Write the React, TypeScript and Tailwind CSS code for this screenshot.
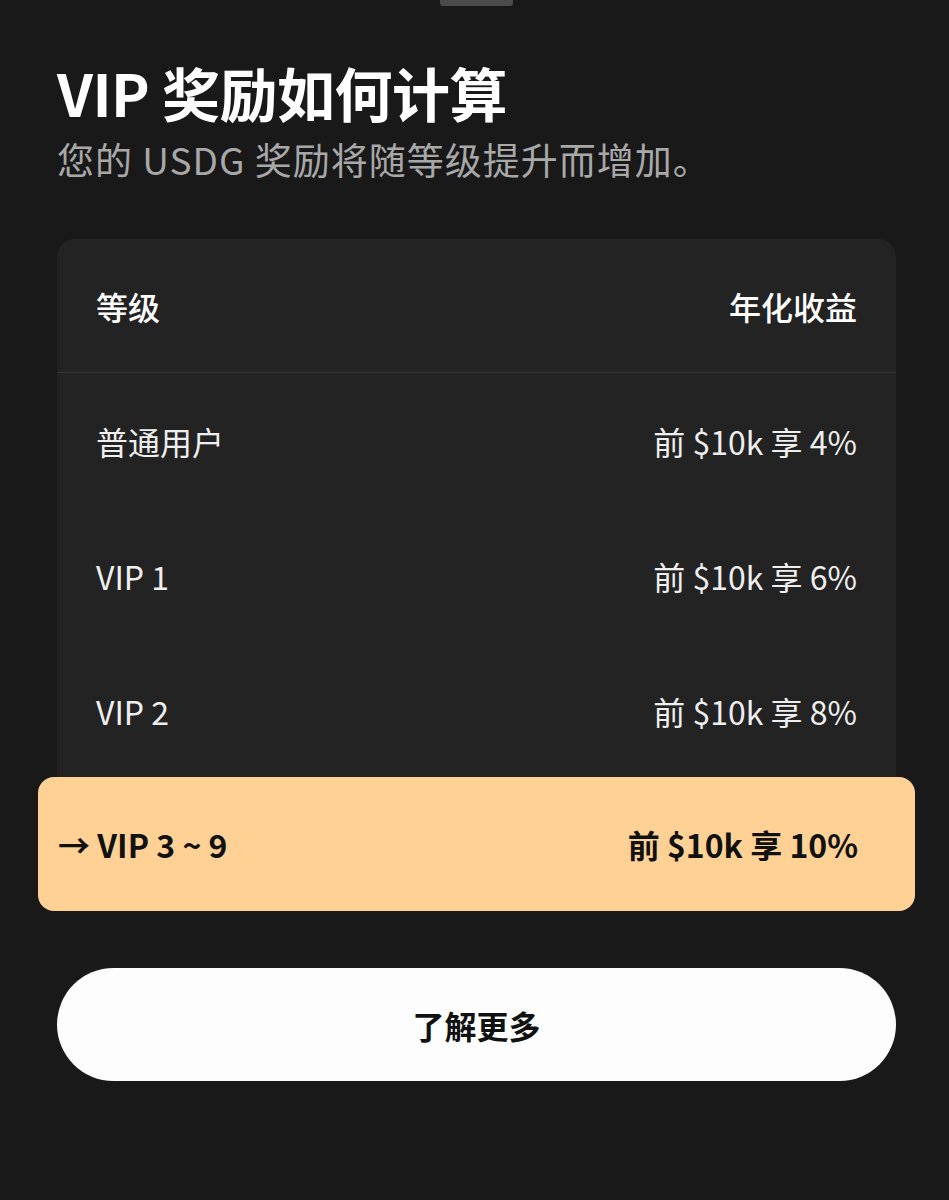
// VIP 奖励计算说明 — 底部弹层

const tiers = [
  { level: '普通用户', rate: '前 $10k 享 4%' },
  { level: 'VIP 1', rate: '前 $10k 享 6%' },
  { level: 'VIP 2', rate: '前 $10k 享 8%' },
];

export default function App() {
  return (
    <div
      className="flex h-[1200px] w-full flex-col bg-[#191919] pr-[53px] pl-[57px] text-white"
      style={{ fontFamily: '"Noto Sans CJK SC", "Noto Sans", sans-serif' }}
    >
      <div className="mx-auto h-[6px] w-[73px] shrink-0 rounded-b-[3px] bg-[#4b4b4b]" />

      <h1 className="mt-[52px] text-[58px] leading-[68px] font-bold tracking-[-0.5px]">VIP 奖励如何计算</h1>
      <p className="mt-[10px] text-[37px] leading-[46px] tracking-[1px] text-[#a8a8a8]">您的 USDG 奖励将随等级提升而增加。</p>

      <section className="mt-[57px] rounded-[18px] bg-[#232323]">
        <div className="flex h-[134px] items-center justify-between border-b border-[#343434] px-[39px] text-[32px] font-medium">
          <span>等级</span>
          <span>年化收益</span>
        </div>
        {tiers.map((t) => (
          <div key={t.level} className="flex h-[135px] items-center justify-between px-[39px] text-[32px] text-[#efefef]">
            <span>{t.level}</span>
            <span>{t.rate}</span>
          </div>
        ))}
        <div className="-mx-[19px] -mt-[1px] flex h-[134px] items-center justify-between rounded-[16px] bg-[#ffd194] pr-[57px] pl-[20px] text-[32px] font-bold text-[#111]">
          <span>→ VIP 3 ~ 9</span>
          <span>前 $10k 享 10%</span>
        </div>
      </section>

      <button className="mt-[57px] flex h-[113px] w-full shrink-0 items-center justify-center rounded-full bg-[#fdfdfd] text-[32px] font-bold text-[#111]">
        了解更多
      </button>
    </div>
  );
}
